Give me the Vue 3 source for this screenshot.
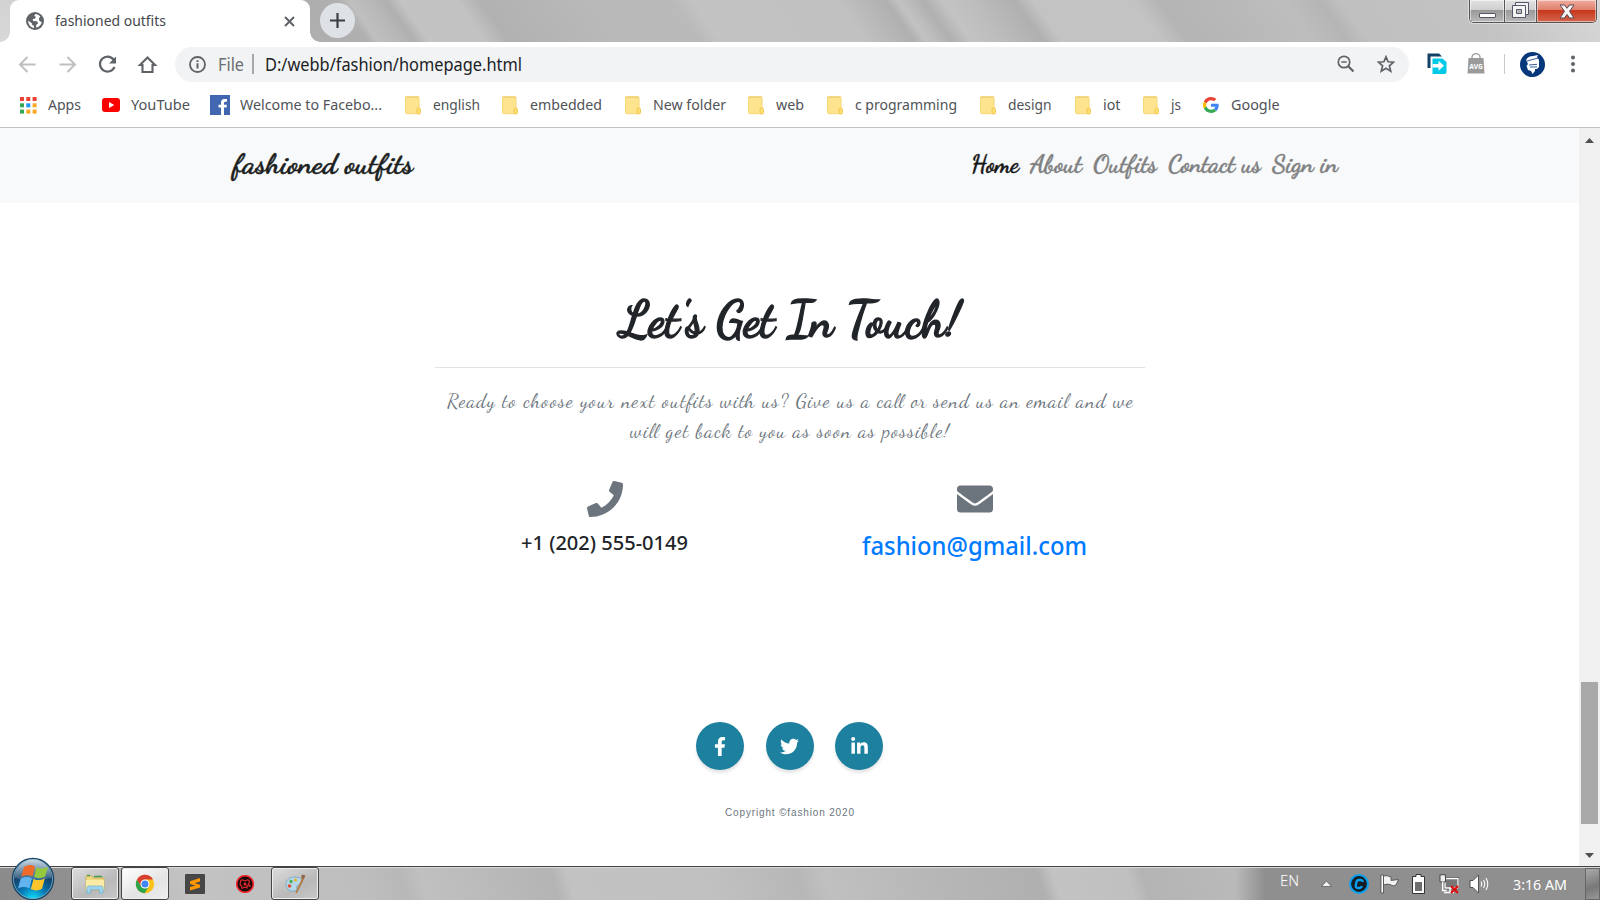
<script setup>
import { h } from 'vue'

// One line of text set to a known width; x starts at the box's left edge.
const FitText = (p) =>
  h('svg', { class: 'fit', width: p.w, height: p.h, 'aria-label': p.text }, [
    h('text', { x: 0, y: p.b, textLength: p.w, lengthAdjust: p.adjust || 'spacingAndGlyphs' }, p.text)
  ])
FitText.props = ['text', 'w', 'h', 'b', 'adjust']

const raw = [
  ['apps', 'Apps', 20, 48, 33],
  ['youtube', 'YouTube', 102, 131, 59],
  ['facebook', 'Welcome to Facebo...', 210, 240, 142],
  ['folder', 'english', 405, 432.5, 47],
  ['folder', 'embedded', 502, 530, 72],
  ['folder', 'New folder', 625, 652.5, 73],
  ['folder', 'web', 748, 776, 28],
  ['folder', 'c programming', 827, 855, 102],
  ['folder', 'design', 980, 1007.5, 43.5],
  ['folder', 'iot', 1075, 1102.5, 17.5],
  ['folder', 'js', 1143, 1171, 10],
  ['google', 'Google', 1203, 1231, 48.5]
]
const bookmarks = raw.map(([icon, text, ix, tx, w], i) => ({
  icon, text, w,
  gap: tx - ix,
  total: (raw[i + 1] ? raw[i + 1][2] : 1300) - ix
}))
const dots = ['#ea4335', '#ea4335', '#ea4335', '#34a853', '#2196f3', '#f9a825', '#34a853', '#f9a825', '#f9a825']
const links = [
  { text: 'Home', w: 48, active: true },
  { text: 'About', w: 52 },
  { text: 'Outfits', w: 64 },
  { text: 'Contact us', w: 93 },
  { text: 'Sign in', w: 66 }
]
</script>

<template>
  <div class="screen">
    <header class="titlebar">
      <div class="tab">
        <svg class="globe" width="18" height="18" viewBox="0 0 18 18">
          <circle cx="9" cy="9" r="9" fill="#5f6368" />
          <path d="M9.5 2 L8.2 3.8 L10 5 L8.7 6.8 L6.8 7 L7 9 L11 9.2 L12.2 11.2 L10.3 12.8 L10 15.6 Q14.6 14.6 15.8 10.2 L13.5 9 L12.8 6.6 L14.3 4.5 Q12.5 2.4 9.5 2Z M2 8.6 L6 11.4 L6.2 13 L8 14 L8 16 Q2.8 15.4 2 8.6Z" fill="#fff" />
        </svg>
        <FitText class="tab-title" text="fashioned outfits" :w="111" :h="42" :b="26" />
        <svg class="x" width="11" height="11" viewBox="0 0 11 11"><path d="M1 1L10 10M10 1L1 10" stroke="#5f6368" stroke-width="2" /></svg>
      </div>
      <div class="newtab"><svg width="15" height="15" viewBox="0 0 15 15"><path d="M7.5 0V15M0 7.5H15" stroke="#3c4043" stroke-width="2.2" /></svg></div>
      <div class="winctl">
        <span class="min"><i></i></span>
        <span class="max">
          <svg width="20" height="18" viewBox="0 0 20 18"><path d="M4.5 1.5h13v12h-13z" fill="#f2f2f2" stroke="#55586a" /><path d="M1.5 4.5h13v12h-13z" fill="#f4f4f4" stroke="#55586a" /><path d="M5.5 8.5h5v4h-5z" fill="#b8b8b8" stroke="#55586a" /></svg>
        </span>
        <span class="close">
          <svg width="16" height="15" viewBox="0 0 16 15"><path d="M1 1h4.5L8 4.3 10.500 1H15L10.500 7.300 15 14h-4.500L8 10.400 5.500 14H1L5.500 7.300Z" fill="#f6f6f6" stroke="#5b4a55" stroke-width="1" /></svg>
        </span>
      </div>
    </header>

    <div class="toolbar">
      <svg class="navbtns" width="160" height="44" viewBox="0 0 160 44" fill="none" stroke-width="2">
        <path d="M35.500 22.500H20.500M27.500 15L20 22.500L27.500 30" stroke="#bdbfc1" />
        <path d="M59.500 22.500H74.500M67.500 15L75 22.500L67.500 30" stroke="#bdbfc1" />
        <path d="M113.800 18A7.500 7.500 0 1 0 114.500 24.800" stroke="#5f6368" stroke-width="2.200" />
        <path d="M116 14.500V21.500H109Z" fill="#5f6368" />
        <path d="M140 23L147.500 15.500L155 23H152.500V30H142.500V23Z" stroke="#5f6368" stroke-width="2.100" />
      </svg>
      <div class="omnibox">
        <svg class="info" width="17" height="17" viewBox="0 0 17 17"><circle cx="8.500" cy="8.500" r="7.500" fill="none" stroke="#5f6368" stroke-width="1.800" /><path d="M8.500 7.300V12.500M8.500 4.300V6.100" stroke="#5f6368" stroke-width="2" /></svg>
        <FitText class="file" text="File" :w="26" :h="35" :b="24" />
        <i class="bar"></i>
        <FitText class="url" text="D:/webb/fashion/homepage.html" :w="257" :h="35" :b="24" />
        <svg class="mag" width="18" height="18" viewBox="0 0 18 18" fill="none" stroke="#5f6368"><circle cx="7" cy="7" r="5.700" stroke-width="1.700" /><path d="M4.300 7h5.400" stroke-width="1.500" /><path d="M11 11l5.500 5.500" stroke-width="2.200" /></svg>
        <svg class="star" width="18" height="18" viewBox="0 0 18 18"><path d="M9 1.800L11.100 6.800L16.500 7.200L12.400 10.800L13.700 16.100L9 13.200L4.300 16.100L5.600 10.800L1.500 7.200L6.900 6.800Z" fill="none" stroke="#5f6368" stroke-width="1.700" /></svg>
      </div>
      <svg class="ext" width="20" height="22" viewBox="0 0 20 22"><path d="M.5 15V.5H12L15 3.500H3.500V15Z" fill="#124166" /><path d="M5.500 5.500h10L19.500 9v10q0 2-2 2H5.500Z" fill="#00c9e8" /><path d="M5.500 11h6V7.800l5.500 5-5.500 5v-3.300H5.500Z" fill="#fff" /></svg>
      <svg class="avg" width="18" height="22" viewBox="0 0 18 22"><path d="M5 6V4a4 3.300 0 0 1 8 0v2" fill="none" stroke="#999" stroke-width="1.300" /><path d="M1.500 5h15l1 15.500h-17Z" fill="#9b9b9b" /><text x="2.300" y="15.500" textLength="13.500" lengthAdjust="spacingAndGlyphs" fill="#fff" font-size="7.500" font-weight="700">AVG</text></svg>
      <i class="vsep"></i>
      <svg class="avatar" width="25" height="25" viewBox="0 0 25 25"><circle cx="12.500" cy="12.500" r="12.500" fill="#06377b" /><path d="M6 8Q8 4 13 4L18 3 17 5 19 8 19 15 17 17H15V19L12.500 22 11 19 8 18 6.500 14 8 12Z" fill="#fff" /><path d="M5.500 9.500L18 6M9 13L17 12.300M10 15L17 15" stroke="#06377b" stroke-width=".8" /></svg>
      <svg class="menu" width="6" height="18" viewBox="0 0 6 18" fill="#5f6368"><circle cx="3" cy="2.500" r="2" /><circle cx="3" cy="9" r="2" /><circle cx="3" cy="15.500" r="2" /></svg>
    </div>

    <nav class="bookmarks">
      <div v-for="b in bookmarks" :key="b.text" class="bm" :style="{ width: b.total + 'px' }">
        <span class="bm-icon" :style="{ width: b.gap + 'px' }">
          <svg v-if="b.icon === 'apps'" width="17" height="17" viewBox="0 0 17 17"><rect v-for="(c, i) in dots" :key="i" :x="(i % 3) * 6.300" :y="Math.floor(i / 3) * 6.300" width="4" height="4" :fill="c" /></svg>
          <svg v-else-if="b.icon === 'youtube'" width="18" height="14" viewBox="0 0 18 14"><rect width="18" height="14" rx="3" fill="#f00" /><path d="M7 4L12.300 7L7 10Z" fill="#fff" /></svg>
          <svg v-else-if="b.icon === 'facebook'" width="20" height="20" viewBox="0 0 20 20"><rect width="20" height="20" fill="#4267b2" /><path d="M11 20V12.500H8.500V9.700H11V7.500Q11 4 14.300 4H17V6.700H15.300Q14 6.700 14 8V9.700H16.900L16.500 12.500H14V20Z" fill="#fff" /></svg>
          <svg v-else-if="b.icon === 'google'" width="16" height="16" viewBox="0 0 48 48"><path fill="#EA4335" d="M24 9.500c3.540 0 6.710 1.220 9.210 3.600l6.850-6.850C35.900 2.380 30.470 0 24 0 14.620 0 6.510 5.380 2.560 13.220l7.980 6.190C12.430 13.720 17.740 9.500 24 9.500z" /><path fill="#4285F4" d="M46.980 24.550c0-1.570-.15-3.090-.38-4.550H24v9.020h12.940c-.58 2.960-2.260 5.480-4.780 7.180l7.730 6c4.510-4.180 7.090-10.360 7.090-17.650z" /><path fill="#FBBC05" d="M10.530 28.590c-.48-1.450-.76-2.990-.76-4.590s.27-3.140.76-4.590l-7.980-6.190C.92 16.460 0 20.120 0 24c0 3.880.92 7.540 2.560 10.780l7.970-6.190z" /><path fill="#34A853" d="M24 48c6.480 0 11.930-2.130 15.890-5.810l-7.730-6c-2.150 1.450-4.920 2.300-8.160 2.300-6.260 0-11.570-4.220-13.470-9.910l-7.980 6.190C6.510 42.620 14.620 48 24 48z" /></svg>
          <svg v-else width="16" height="19" viewBox="0 0 16 19"><rect x=".5" y=".7" width="13.500" height="17" rx="1.300" fill="#ffe48f" stroke="#f7d875" /><path d="M.5 1.200H14" stroke="#efd37b" stroke-width="1.500" /><rect x="12" y="12" width="3.500" height="6" rx="1.500" fill="#ffdf75" stroke="#efc84f" /></svg>
        </span>
        <FitText class="bm-text" :text="b.text" :w="b.w" :h="40" :b="24" />
      </div>
    </nav>

    <div class="viewport">
      <main class="page">
        <div class="sitenav">
          <FitText class="script brand" text="fashioned outfits" :w="180" :h="75" :b="44.5" />
          <div class="links">
            <FitText v-for="l in links" :key="l.text" class="script link" :class="{ active: l.active }" :text="l.text" :w="l.w" :h="75" :b="43.5" />
          </div>
        </div>
        <section class="contact">
          <FitText class="script heading" text="Let's Get In Touch!" :w="340" :h="70" :b="51" />
          <hr />
          <FitText class="script lead" adjust="spacing" text="Ready to choose your next outfits with us? Give us a call or send us an email and we" :w="686" :h="30" :b="19" />
          <FitText class="script lead" adjust="spacing" text="will get back to you as soon as possible!" :w="319" :h="30" :b="19" />
          <div class="ways">
            <div class="way">
              <svg width="36" height="36" viewBox="0 0 512 512"><path fill="#6c757d" d="M493.400 24.600l-104-24c-11.300-2.600-22.900 3.300-27.500 13.900l-48 112c-4.200 9.800-1.400 21.300 6.900 28l60.600 49.600c-36 76.700-98.900 140.500-177.200 177.200l-49.600-60.600c-6.800-8.300-18.200-11.100-28-6.900l-112 48C3.900 366.500-2 378.100.6 389.400l24 104C27.100 504.200 36.700 512 48 512c256.100 0 464-207.500 464-464 0-11.200-7.700-20.900-18.600-23.400z" /></svg>
              <FitText class="phone" text="+1 (202) 555-0149" :w="167" :h="40" :b="33" />
            </div>
            <div class="way">
              <svg width="36" height="36" viewBox="0 0 512 512"><path fill="#6c757d" d="M502.300 190.800c3.900-3.100 9.700-.2 9.700 4.700V400c0 26.500-21.500 48-48 48H48c-26.500 0-48-21.500-48-48V195.600c0-5 5.700-7.800 9.700-4.700 22.400 17.400 52.100 39.500 154.100 113.600 21.100 15.400 56.700 47.800 92.200 47.600 35.700.3 72-32.800 92.300-47.600 102-74.100 131.600-96.300 154-113.700zM256 320c23.200.4 56.600-29.200 73.400-41.400 132.700-96.300 142.800-104.700 173.400-128.700 5.800-4.500 9.200-11.500 9.200-18.900v-19c0-26.500-21.500-48-48-48H48c-26.500 0-48 21.500-48 48v19c0 7.400 3.400 14.300 9.200 18.900 30.600 23.900 40.700 32.400 173.400 128.700 16.800 12.200 50.200 41.800 73.400 41.400z" /></svg>
              <FitText class="email" text="fashion@gmail.com" :w="225" :h="45" :b="38" />
            </div>
          </div>
        </section>
        <footer class="foot">
          <div class="social">
            <a><svg width="12" height="19" viewBox="0 0 320 512"><path fill="#fff" d="M279.140 288l14.220-92.660h-88.910v-60.130c0-25.350 12.420-50.060 52.240-50.060h40.420V6.260S260.430 0 225.360 0c-73.220 0-121.080 44.380-121.080 124.720v70.620H22.890V288h81.390v224h100.170V288z" /></svg></a>
            <a><svg width="19" height="19" viewBox="0 0 512 512"><path fill="#fff" d="M459.370 151.716c.325 4.548.325 9.097.325 13.645 0 138.720-105.583 298.558-298.558 298.558-59.452 0-114.680-17.219-161.137-47.106 8.447.974 16.568 1.299 25.340 1.299 49.055 0 94.213-16.568 130.274-44.832-46.132-.975-84.792-31.188-98.112-72.772 6.498.974 12.995 1.624 19.818 1.624 9.421 0 18.843-1.300 27.614-3.573-48.081-9.747-84.143-51.980-84.143-102.985v-1.299c13.969 7.797 30.214 12.670 47.431 13.319-28.264-18.843-46.781-51.005-46.781-87.391 0-19.492 5.197-37.360 14.294-52.954 51.655 63.675 129.300 105.258 216.365 109.807-1.624-7.797-2.599-15.918-2.599-24.040 0-57.828 46.782-104.934 104.934-104.934 30.213 0 57.502 12.670 76.670 33.137 23.715-4.548 46.456-13.320 66.599-25.340-7.798 24.366-24.366 44.833-46.132 57.827 21.117-2.273 41.584-8.122 60.426-16.243-14.292 20.791-32.161 39.308-52.628 54.253z" /></svg></a>
            <a><svg width="17" height="19" viewBox="0 0 448 512"><path fill="#fff" d="M100.280 448H7.400V148.900h92.880zM53.790 108.100C24.090 108.100 0 83.500 0 53.800a53.790 53.790 0 0 1 107.580 0c0 29.700-24.100 54.300-53.790 54.300zM447.900 448h-92.680V302.400c0-34.700-.7-79.200-48.290-79.200-48.290 0-55.690 37.700-55.690 76.700V448h-92.780V148.900h89.080v40.800h1.300c12.400-23.500 42.690-48.300 87.880-48.300 94 0 111.280 61.900 111.280 142.300V448z" /></svg></a>
          </div>
          <FitText class="copy" adjust="spacing" text="Copyright ©fashion 2020" :w="129" :h="20" :b="14" />
        </footer>
      </main>
      <aside class="scroll">
        <svg width="9" height="5" viewBox="0 0 9 5"><path d="M0 5L4.500 0L9 5Z" fill="#505050" /></svg>
        <i class="thumb"></i>
        <svg width="9" height="5" viewBox="0 0 9 5"><path d="M0 0L4.500 5L9 0Z" fill="#505050" /></svg>
      </aside>
    </div>

    <footer class="taskbar">
      <svg class="orb" width="44" height="44" viewBox="0 0 44 44">
        <defs>
          <radialGradient id="orb" cx=".5" cy="1" r=".95"><stop offset="0" stop-color="#10e5ff" /><stop offset=".35" stop-color="#0878b5" /><stop offset=".7" stop-color="#123e66" /><stop offset="1" stop-color="#537694" /></radialGradient>
          <linearGradient id="shine" x2="0" y2="1"><stop offset="0" stop-color="#dce8f1" stop-opacity=".85" /><stop offset="1" stop-color="#9ab6cc" stop-opacity=".25" /></linearGradient>
        </defs>
        <circle cx="22" cy="22" r="20.500" fill="url(#orb)" stroke="#1c4464" stroke-width="1.500" />
        <circle cx="22" cy="22" r="19.500" fill="none" stroke="#7fb5cd" stroke-width=".8" />
        <path d="M3.500 21A18.500 18.500 0 0 1 40.500 21Q22 25 3.500 21Z" fill="url(#shine)" />
        <path d="M13 10Q18 6.500 24 9.500L21.500 19.500Q16 17 10.200 19.800Z" fill="#ef6b2c" />
        <path d="M25.500 10.200Q31 13 37 9.800L34.200 19.600Q28.500 22.500 23 20Z" fill="#94c83d" />
        <path d="M9.800 21.500Q15.500 18.800 21 21.300L18.400 31.500Q13 28.700 7 31.500Z" fill="#63b4ee" />
        <path d="M22.500 21.900Q28 24.500 33.800 21.400L31 31.800Q25.500 35 19.800 32Z" fill="#fcc52c" />
      </svg>
      <span class="task">
        <svg width="22" height="20" viewBox="0 0 22 20"><path d="M2 2h6l1 2h11v12H2Z" fill="#eed77c" stroke="#c4a94d" stroke-width=".7" /><path d="M3 1.500h3M10 2.500h8" stroke="#4b9c4b" stroke-width="1.500" /><path d="M2 6h18v10H2Z" fill="#f9eba5" /><path d="M3 19v-5q0-2 2-2h12q2 0 2 2v5h-3.500v-3.500h-9V19Z" fill="#9fd5ee" stroke="#6aafd0" stroke-width=".7" /></svg>
      </span>
      <span class="task on">
        <svg width="20" height="20" viewBox="0 0 48 48"><circle cx="24" cy="24" r="22" fill="#fbc116" /><path d="M24 24L4.900 13A22 22 0 0 1 43.100 13H24Z" fill="#d93f31" /><path d="M4.900 13A22 22 0 0 0 23 46L33.500 29.500H14.500Z" fill="#2ba24c" /><path d="M4.900 13L14.500 29.500 24 13Z" fill="#d93f31" /><circle cx="24" cy="24" r="11" fill="#fff" /><circle cx="24" cy="24" r="8.500" fill="#4285f4" /></svg>
      </span>
      <svg class="sublime" width="20" height="20" viewBox="0 0 20 20"><rect width="20" height="20" rx="1" fill="#474747" /><path d="M5 7.200L15 4V7.600L9.500 9.200 15 10.800V13.600L5 16.500V13L10.500 11.400 5 9.900Z" fill="#ff9800" /></svg>
      <svg class="red" width="18" height="18" viewBox="0 0 18 18"><circle cx="9" cy="9" r="8.300" fill="#1c0808" stroke="#f0262d" stroke-width="1.600" /><path d="M4.500 7Q4.500 4.500 7 5L9 6L11 5Q13.500 4.500 13.500 7L12.500 8.500L14 11L11 10.500L11 13L8.500 12L6 13.500L5.500 11L4 9.500Z" fill="none" stroke="#e32b30" stroke-width="1.100" /><circle cx="9" cy="9" r="1.500" fill="#e32b30" /></svg>
      <span class="task paint">
        <svg width="22" height="20" viewBox="0 0 22 20"><path d="M2 12Q1 4 10 3Q19 3 18 9Q17 11 14 11Q11 12 13 15Q12 18 7 17Q3 16 2 12Z" fill="#b5d7ea" stroke="#78a6c3" stroke-width=".8" /><circle cx="5.500" cy="12" r="1.800" fill="#e04b32" /><circle cx="7" cy="7.500" r="1.700" fill="#4caf50" /><circle cx="11.500" cy="6" r="1.600" fill="#e8b41e" /><path d="M19.500 1L21 3L13 19L11.500 19.500L12 17.500Z" fill="#b5793f" /><path d="M18 .5L21.500 1.500L19.500 5L17 4Z" fill="#8c6a4a" /></svg>
      </span>
      <div class="tray">
        <FitText class="lang" text="EN" :w="19" :h="33" :b="19" />
        <svg class="up" width="11" height="7" viewBox="0 0 11 7"><path d="M.5 6.500L5.500 1L10.500 6.500Z" fill="#f4f4f4" stroke="#555" stroke-width=".7" /></svg>
        <svg class="c" width="20" height="20" viewBox="0 0 20 20"><circle cx="10" cy="10" r="8.900" fill="#151e26" stroke="#0aa0f2" stroke-width="2" /><path d="M13.700 8Q13.800 6 11.500 6H10Q8 6 7.400 8.300L6.800 11.500Q6.500 14 8.800 14H10Q12.300 14 12.900 12" fill="none" stroke="#0aa0f2" stroke-width="2.300" /></svg>
        <svg class="flag" width="19" height="20" viewBox="0 0 19 20"><path d="M1 1h2.500V19H1Z" fill="#fff" stroke="#444" stroke-width=".8" /><path d="M3.500 2Q7 1 11 3V6.500L18.500 5.500 16 11Q13 13 10 10.500 7 9.500 3.500 11Z" fill="#f3f3f3" stroke="#444" stroke-width=".8" /></svg>
        <svg class="bat" width="13" height="20" viewBox="0 0 13 20"><path d="M4 .5h5v2h3.500v17H.5v-17H4Z" fill="#fff" stroke="#333" /><path d="M3 8h7v9H3Z" fill="#6e6e6e" /></svg>
        <svg class="net" width="20" height="20" viewBox="0 0 20 20"><path d="M6 4.500H19V14H6Z" fill="#666" stroke="#333" stroke-width="2.600" /><path d="M6 4.500H19V14H6Z" fill="#777" stroke="#fff" stroke-width="1.300" /><path d="M5 18.500H15M11 14v4" stroke="#fff" stroke-width="1.500" /><path d="M1 .8h5.500V8H1Z" fill="#eee" stroke="#444" /><path d="M3.700 8v8.500h4" fill="none" stroke="#fff" stroke-width="1.500" /><path d="M12 12L19 19M19 12L12 19" stroke="#e00d0d" stroke-width="2.200" /></svg>
        <svg class="vol" width="20" height="20" viewBox="0 0 20 20"><path d="M1 6.500H4L9.500 1V19L4 13.500H1Z" fill="#fff" stroke="#444" stroke-width=".9" /><path d="M12 7.500Q13.500 10 12 12.500M14.500 6Q17 10 14.500 14M17 4Q20.500 10 17 16" fill="none" stroke="#fff" stroke-width="1.100" /></svg>
        <FitText class="time" text="3:16 AM" :w="54" :h="33" :b="23" />
        <i class="peek"></i>
      </div>
    </footer>
  </div>
</template>

<style>
html, body { margin: 0; overflow: hidden; background: #fff; }
</style>

<style scoped>
.screen { width: 1600px; height: 900px; display: flex; flex-direction: column; overflow: hidden; font-family: "Noto Sans", "Open Sans", sans-serif; background: #fff; }
svg { display: block; flex: none; }
i { display: block; flex: none; }
.fit { overflow: visible; }
.titlebar { height: 42px; flex: none; display: flex; padding-left: 10px; background: linear-gradient(54.5deg, #d8d8d8 0, #cfcfcf 50px, #aeaeae 270px, #b0b0b0 300px, #bfbfbf 308px, #b8b8b8 325px, #b0b0b0 338px, #c3c3c3 350px, #c2c2c2 396px, #b1b1b1 415px, #b9b9b9 500px, #bababa 572px, #c3c3c3 588px, #c1c1c1 705px, #b0b0b0 745px, #c2c2c2 755px, #bdbdbd 762px, #b0b0b0 775px, #c3c3c3 792px, #bdbdbd 815px, #b0b0b0 850px, #c3c3c3 865px, #c3c3c3 946px, #b4b4b4 968px, #bdbdbd 1070px, #b5b5b5 1098px, #c0c0c0 1115px, #c3c3c3 1220px, #d5d5d5 1310px); }
.tab { width: 300px; height: 42px; background: #fff; border-radius: 9px 9px 0 0; display: flex; align-items: center; box-sizing: border-box; padding-left: 16px; position: relative; }
.tab::before, .tab::after { content: ""; position: absolute; bottom: 0; width: 10px; height: 10px; }
.tab::before { left: -10px; background: radial-gradient(circle at 0 0, transparent 9.5px, #fff 10px); }
.tab::after { right: -10px; background: radial-gradient(circle at 100% 0, transparent 9.5px, #fff 10px); }
.tab-title { margin-left: 11px; font-size: 14.5px; fill: #45484c; }
.x { margin-left: 118px; }
.newtab { width: 35px; height: 35px; margin: 3px 0 0 10px; border-radius: 50%; background: #dee1e6; display: flex; align-items: center; justify-content: center; }
.winctl { margin-left: auto; margin-right: 3px; width: 128px; height: 23px; box-sizing: border-box; border: 1px solid #555; border-top: 0; border-radius: 0 0 5px 5px; display: flex; overflow: hidden; box-shadow: 0 0 0 1px #ddd; }
.winctl span { display: flex; justify-content: center; box-shadow: inset 0 0 0 1px #ffffff80; }
.min, .max { background: linear-gradient(#e2e2e2 0, #cfcfcf 45%, #999 46%, #b9b9b9 100%); border-right: 1px solid #555; }
.min { width: 34px; }
.max { width: 32px; padding-top: 1px; box-sizing: border-box; }
.min i { width: 15px; height: 3px; margin-top: 13px; background: #fff; border: 1px solid #55586a; border-radius: 1px; }
.close { flex: 1; background: linear-gradient(#efada0 0, #e17f6c 45%, #c6361c 46%, #d5664e 100%); align-items: flex-start; padding-top: 4px; box-sizing: border-box; }
.toolbar { height: 44px; flex: none; display: flex; align-items: center; }
.omnibox { width: 1234px; height: 35px; margin-left: 15px; border-radius: 18px; background: #f1f3f4; display: flex; align-items: center; }
.info { margin-left: 14px; }
.file { margin-left: 12px; font-size: 17.5px; fill: #6a6e72; }
.bar { width: 2px; height: 20px; background: #a5a8ab; margin: 0 11px 0 8px; }
.url { font-size: 17.5px; fill: #202124; }
.mag { margin-left: 815px; }
.star { margin-left: 22px; }
.ext { margin-left: 18px; }
.avg { margin-left: 20px; }
.vsep { width: 1px; height: 20px; margin-left: 19px; background: #c8cacc; }
.avatar { margin-left: 15px; }
.menu { margin-left: 24.500px; }
.bookmarks { height: 41px; flex: none; display: flex; padding-left: 20px; border-bottom: 1px solid #bfc0c2; }
.bm { display: flex; flex: none; }
.bm-icon { height: 38px; display: flex; flex: none; align-items: center; }
.bm-text { font-size: 15px; fill: #505357; }
.viewport { height: 738px; flex: none; display: flex; }
.page { width: 1579px; display: flex; flex-direction: column; }
.sitenav { height: 75px; box-sizing: border-box; background: #f8f9fa; display: flex; padding: 0 241px 0 233px; justify-content: space-between; }
.links { display: flex; gap: 11px; }
.script { font-family: "Dancing Script", "Liberation Serif", cursive; }
.brand { font-size: 29px; font-weight: 700; fill: #1c1f22; stroke: #1c1f22; stroke-width: .5px; }
.link { font-size: 26px; font-weight: 700; fill: #808182; stroke: #808182; stroke-width: .4px; }
.link.active { fill: #161717; stroke: #161717; }
.contact { width: 710px; margin: 82px auto 0; display: flex; flex-direction: column; align-items: center; }
.heading { font-size: 51.5px; font-weight: 700; fill: #212529; stroke: #212529; stroke-width: 1.3px; }
hr { width: 710px; height: 1px; border: 0; background: #e3e3e3; margin: 12px 0 20px; }
.lead { font-size: 20px; fill: #6c757d; }
.ways { display: grid; grid-template-columns: 370px 370px; margin-top: 33px; }
.way { display: flex; flex-direction: column; align-items: center; }
.phone { font-size: 19.5px; font-weight: 500; fill: #212529; }
.email { font-size: 25.5px; font-weight: 500; fill: #007bff; }
.foot { margin-top: auto; margin-bottom: 44px; display: flex; flex-direction: column; align-items: center; }
.social { display: flex; gap: 21.5px; margin-bottom: 32px; }
.social a { width: 48px; height: 48px; border-radius: 50%; background: #1d809f; display: flex; align-items: center; justify-content: center; box-shadow: 0 3px 3px #0000001a; }
.copy { font-family: "Liberation Sans", Arial, sans-serif; font-size: 10px; fill: #6c757d; }
.scroll { width: 21px; background: #f0f0f0; display: flex; flex-direction: column; align-items: center; box-sizing: border-box; padding-top: 10px; }
.thumb { width: 17px; height: 142px; margin: 539px 0 29px; background: #a8a8a8; }
.taskbar { height: 34px; flex: none; box-sizing: border-box; border-top: 1px solid #444; box-shadow: inset 0 1px #d8d8d8; display: flex; align-items: center; background: linear-gradient(90deg, transparent 1235px, #8f8f8f 1265px), linear-gradient(73deg, #8b8b8b 0, #909090 75px, #b5b5b5 120px, #c3c3c3 180px, #bebebe 350px, #b8b8b8 390px, #c0c0c0 410px, #b4b4b4 535px, #c2c2c2 550px, #c1c1c1 680px, #b7b7b7 770px, #c0c0c0 795px, #b5b5b5 920px, #b0b0b0 1000px, #c3c3c3 1015px, #c0c0c0 1085px, #b4b4b4 1100px, #bcbcbc 1220px); }
.orb { margin: -9px 0 0 11px; }
.task { width: 48px; height: 33px; box-sizing: border-box; margin-left: 16px; border: 1px solid #444; border-radius: 3px; box-shadow: inset 0 0 0 1px #eee; background: linear-gradient(150deg, #ddd, #b9b9b9 60%, #c8c8c8); display: flex; align-items: center; justify-content: center; }
.task.on { margin-left: 2px; background: linear-gradient(150deg, #fff, #e3e3e3 60%, #eee); }
.sublime { margin-left: 16px; }
.red { margin-left: 31px; }
.task.paint { margin-left: 17px; }
.tray { margin-left: auto; display: flex; align-items: center; height: 33px; }
.lang { font-size: 14px; fill: #fff; font-weight: 300; }
.up { margin-left: 22px; }
.c { margin-left: 17px; }
.flag { margin-left: 11px; }
.bat { margin-left: 13px; }
.net { margin-left: 14px; }
.vol { margin-left: 10px; }
.time { margin-left: 24px; font-size: 15px; fill: #fff; }
.peek { width: 15px; height: 32px; box-sizing: border-box; margin-left: 18px; border: 1px solid #d0d0d0; outline: 1px solid #666; outline-offset: -1px; background: linear-gradient(160deg, #aaa, #787878 60%, #999); }
</style>
